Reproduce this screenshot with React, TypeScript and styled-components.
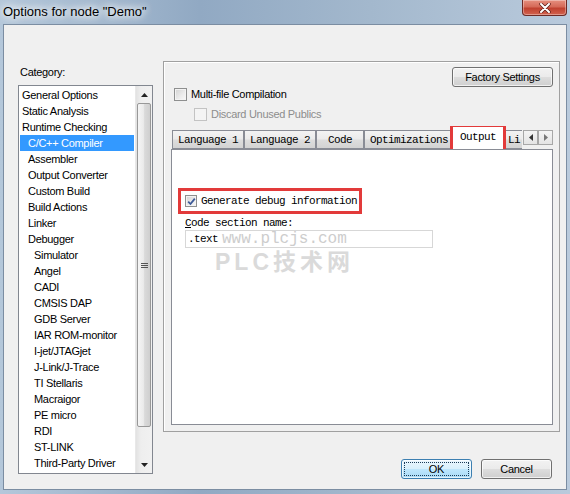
import React from "react";
import styled, { createGlobalStyle } from "styled-components";

const GlobalStyle = createGlobalStyle`
  html, body {
    margin: 0;
    padding: 0;
  }
  body {
    width: 570px;
    height: 494px;
    overflow: hidden;
    font-family: "Liberation Sans", Arial, sans-serif;
  }
`;

const Window = styled.div`
  width: 570px;
  height: 494px;
  box-sizing: border-box;
  display: flex;
  flex-direction: column;
  padding: 0 3px 4px 3px;
  background: linear-gradient(90deg, #b4c7da 0%, #91a9c3 35%, #a3b8cd 65%, #b9cadc 100%);
`;

const TitleBar = styled.div`
  height: 24px;
  display: flex;
  align-items: flex-start;
`;

const Title = styled.div`
  padding-top: 4px;
  font-size: 13px;
  line-height: 15px;
  color: #000;
  text-shadow: 0 0 6px #fff, 0 0 10px #fff, 0 0 14px #fff;
`;

const CloseButton = styled.div`
  margin-left: auto;
  width: 45px;
  height: 16px;
  box-sizing: border-box;
  border: 1px solid #6d2a25;
  border-top: none;
  border-radius: 0 0 4px 4px;
  background: linear-gradient(180deg, #e6907f 0%, #d56a58 45%, #c0412f 55%, #d2634f 100%);
  display: flex;
  align-items: center;
  justify-content: center;
  box-shadow: inset 0 0 0 1px rgba(255, 255, 255, 0.35);
`;

const Client = styled.div`
  flex: 1;
  display: flex;
  align-items: flex-start;
  border: 1px solid #7b8da2;
  background: #f0f0f0;
`;

const LeftColumn = styled.div`
  margin-left: 14px;
  width: 135px;
  display: flex;
  flex-direction: column;
`;

const Label = styled.div`
  margin-top: 40px;
  font-size: 11px;
  letter-spacing: -0.3px;
  line-height: 14px;
  padding-left: 2px;
  color: #000;
`;

const ListBox = styled.div`
  margin-top: 6px;
  height: 389px;
  box-sizing: border-box;
  border: 1px solid #828790;
  background: #fff;
  display: flex;
`;

const Items = styled.div`
  flex: 1;
  padding: 1px;
  display: flex;
  flex-direction: column;
`;

const Item = styled.div<{ $level: number; $selected?: boolean }>`
  height: 16px;
  line-height: 16px;
  font-size: 11px;
  letter-spacing: -0.3px;
  white-space: nowrap;
  padding-left: ${(p) => 2 + p.$level * 6}px;
  color: ${(p) => (p.$selected ? "#fff" : "#000")};
  background: ${(p) => (p.$selected ? "#3399ff" : "transparent")};
`;

const ScrollBar = styled.div`
  width: 17px;
  display: flex;
  flex-direction: column;
  background: linear-gradient(90deg, #e2e2e2 0%, #eeeeee 30%, #f1f1f1 100%);
  border-left: 1px solid #e8e8e8;
  box-sizing: border-box;
`;

const ScrollArrow = styled.div`
  height: 17px;
  display: flex;
  align-items: center;
  justify-content: center;
`;

const Thumb = styled.div`
  height: 324px;
  margin: 0 1px;
  box-sizing: border-box;
  border: 1px solid #989898;
  border-radius: 2px;
  background: linear-gradient(90deg, #f5f5f5 0%, #ebebeb 45%, #dadada 55%, #cfcfcf 100%);
  display: flex;
  align-items: center;
  justify-content: center;
`;

const TrackFill = styled.div`
  flex: 1;
`;

const RightColumn = styled.div`
  margin-left: 10px;
  width: 397px;
  padding-top: 36px;
  display: flex;
  flex-direction: column;
`;

const Panel = styled.div`
  height: 371px;
  box-sizing: border-box;
  border: 1px solid #a0a0a0;
  box-shadow: inset 1px 1px 0 #fff;
  padding: 5px 6px 6px 7px;
  display: flex;
  flex-direction: column;
`;

const TopBar = styled.div`
  display: flex;
  justify-content: flex-end;
`;

const Button = styled.div<{ $width: number; $default?: boolean }>`
  width: ${(p) => p.$width}px;
  height: 20px;
  box-sizing: border-box;
  border: 1px solid ${(p) => (p.$default ? "#3c7fb1" : "#707070")};
  border-radius: 3px;
  background: ${(p) =>
    p.$default
      ? "linear-gradient(180deg, #eaf6fd 0%, #d9f0fc 48%, #bee6fd 52%, #a7d9f5 100%)"
      : "linear-gradient(180deg, #f2f2f2 0%, #ebebeb 48%, #dddddd 52%, #cfcfcf 100%)"};
  box-shadow: inset 0 0 0 1px rgba(255, 255, 255, 0.7);
  outline: ${(p) => (p.$default ? "1px dotted #1b3a57" : "none")};
  outline-offset: -4px;
  font-size: 11px;
  letter-spacing: -0.3px;
  line-height: 18px;
  text-align: center;
  color: #000;
`;

const CheckRow = styled.div<{ $indent: number; $disabled?: boolean }>`
  height: 14px;
  margin-top: ${(p) => (p.$disabled ? 6 : 0)}px;
  padding-left: ${(p) => p.$indent}px;
  display: flex;
  align-items: center;
  gap: 4px;
  font-size: 11px;
  letter-spacing: -0.3px;
  color: ${(p) => (p.$disabled ? "#8d8d8d" : "#000")};
`;

const Box = styled.span<{ $disabled?: boolean; $size: number }>`
  width: ${(p) => p.$size}px;
  height: ${(p) => p.$size}px;
  box-sizing: border-box;
  flex: none;
  border: 1px solid ${(p) => (p.$disabled ? "#c3c3c3" : "#8e8f8f")};
  background: ${(p) =>
    p.$disabled ? "#f4f4f4" : "linear-gradient(135deg, #d2d2d2 0%, #ececec 60%, #f8f8f8 100%)"};
  box-shadow: inset 0 0 0 1px ${(p) => (p.$disabled ? "#f4f4f4" : "#f3f3f3")};
  display: flex;
  align-items: center;
  justify-content: center;
`;

const TabControl = styled.div`
  flex: 1;
  margin-top: 5px;
  display: flex;
  flex-direction: column;
`;

const TabStrip = styled.div`
  height: 23px;
  display: flex;
`;

const TabViewport = styled.div`
  flex: 1;
  overflow: hidden;
  display: flex;
  align-items: flex-end;
  padding-left: 1px;
`;

const Tab = styled.div<{ $active?: boolean; $partial?: boolean }>`
  flex: none;
  position: relative;
  box-sizing: border-box;
  min-width: ${(p) => (p.$partial ? 0 : 48)}px;
  height: ${(p) => (p.$active ? 24 : 19)}px;
  margin: ${(p) => (p.$active ? "0 -2px -1px -2px" : "0")};
  padding: ${(p) => (p.$active ? "0 7px" : p.$partial ? "1px 2px 0 5px" : "1px 5px 0 5px")};
  border: 1px solid #898c95;
  border-right: ${(p) => (p.$partial ? "none" : "1px solid #898c95")};
  border-bottom: ${(p) => (p.$active ? "none" : "1px solid #898c95")};
  background: ${(p) =>
    p.$active
      ? "#fff"
      : "linear-gradient(180deg, #f3f3f3 0%, #ebebeb 48%, #dddddd 52%, #d3d3d3 100%)"};
  z-index: ${(p) => (p.$active ? 2 : 1)};
  font-family: "Liberation Mono", "Courier New", monospace;
  font-size: 11px;
  letter-spacing: -0.6px;
  line-height: ${(p) => (p.$active ? 20 : 16)}px;
  white-space: nowrap;
  text-align: center;
  color: #000;
  outline: ${(p) => (p.$active ? "3px solid #e23a3a" : "none")};
  outline-offset: -1px;
`;

const ArrowGroup = styled.div`
  margin-top: 4px;
  display: flex;
`;

const SpinButton = styled.div`
  width: 15px;
  height: 15px;
  box-sizing: border-box;
  border: 1px solid #a7a7a7;
  background: linear-gradient(180deg, #f4f4f4 0%, #e4e4e4 100%);
  display: flex;
  align-items: center;
  justify-content: center;
`;

const Page = styled.div`
  flex: 1;
  position: relative;
  border: 1px solid #898c95;
  background: #fff;
  display: flex;
  flex-direction: column;
  align-items: flex-start;
`;

const Marked = styled.div`
  margin: 38px 0 0 6px;
  border: 3px solid #e23a3a;
  padding: 3px 2px 3px 4px;
  display: flex;
  align-items: center;
  gap: 4px;
`;

const MonoText = styled.span`
  font-family: "Liberation Mono", "Courier New", monospace;
  font-size: 11px;
  letter-spacing: -0.6px;
  line-height: 14px;
  color: #000;
  white-space: nowrap;
`;

const FieldLabel = styled(MonoText)`
  display: block;
  margin: 2px 0 0 13px;
`;

const Field = styled.div`
  margin-left: 13px;
  width: 248px;
  height: 18px;
  box-sizing: border-box;
  border: 1px solid #d7d7d7;
  padding-left: 2px;
  display: flex;
  align-items: center;
`;

const WatermarkUrl = styled.div`
  position: absolute;
  left: 50px;
  top: 81px;
  font-family: "Liberation Mono", "Courier New", monospace;
  font-size: 16px;
  line-height: 16px;
  color: #cdcdcd;
  pointer-events: none;
`;

const WatermarkName = styled.div`
  position: absolute;
  left: 43px;
  top: 99px;
  font-family: "Liberation Sans", "Noto Sans CJK SC", sans-serif;
  font-weight: bold;
  font-size: 23px;
  letter-spacing: 4px;
  line-height: 26px;
  color: #dadada;
  pointer-events: none;
`;

const ButtonRow = styled.div`
  margin-top: 27px;
  padding-right: 8px;
  display: flex;
  justify-content: flex-end;
  gap: 9px;
`;

const categories: { label: string; level: number; selected?: boolean }[] = [
  { label: "General Options", level: 0 },
  { label: "Static Analysis", level: 0 },
  { label: "Runtime Checking", level: 0 },
  { label: "C/C++ Compiler", level: 1, selected: true },
  { label: "Assembler", level: 1 },
  { label: "Output Converter", level: 1 },
  { label: "Custom Build", level: 1 },
  { label: "Build Actions", level: 1 },
  { label: "Linker", level: 1 },
  { label: "Debugger", level: 1 },
  { label: "Simulator", level: 2 },
  { label: "Angel", level: 2 },
  { label: "CADI", level: 2 },
  { label: "CMSIS DAP", level: 2 },
  { label: "GDB Server", level: 2 },
  { label: "IAR ROM-monitor", level: 2 },
  { label: "I-jet/JTAGjet", level: 2 },
  { label: "J-Link/J-Trace", level: 2 },
  { label: "TI Stellaris", level: 2 },
  { label: "Macraigor", level: 2 },
  { label: "PE micro", level: 2 },
  { label: "RDI", level: 2 },
  { label: "ST-LINK", level: 2 },
  { label: "Third-Party Driver", level: 2 },
];

const tabs = ["Language 1", "Language 2", "Code", "Optimizations", "Output"];

const Triangle: React.FC<{ dir: "up" | "down" | "left" | "right"; color?: string }> = ({
  dir,
  color = "#222",
}) => {
  const pts = {
    up: "0,4 3.5,0 7,4",
    down: "0,0 7,0 3.5,4",
    left: "4,0 4,7 0,3.5",
    right: "0,0 4,3.5 0,7",
  }[dir];
  const vertical = dir === "up" || dir === "down";
  return (
    <svg width={vertical ? 7 : 4} height={vertical ? 4 : 7} viewBox={vertical ? "0 0 7 4" : "0 0 4 7"}>
      <polygon points={pts} fill={color} />
    </svg>
  );
};

const CheckMark = () => (
  <svg width="9" height="9" viewBox="0 0 9 9">
    <path d="M1.2 4.6 L3.5 7 L7.8 1.6" fill="none" stroke="#3d5a98" strokeWidth="1.8" />
  </svg>
);

const App: React.FC = () => {
  return (
    <>
      <GlobalStyle />
      <Window>
        <TitleBar>
          <Title>Options for node "Demo"</Title>
          <CloseButton>
            <svg width="12" height="10" viewBox="0 0 12 10">
              <path d="M2 1 L10 9 M10 1 L2 9" stroke="#5a1d18" strokeWidth="3.4" strokeLinecap="round" />
              <path d="M2 1 L10 9 M10 1 L2 9" stroke="#fff" strokeWidth="2" strokeLinecap="round" />
            </svg>
          </CloseButton>
        </TitleBar>
        <Client>
          <LeftColumn>
            <Label>Category:</Label>
            <ListBox>
              <Items>
                {categories.map((c) => (
                  <Item key={c.label} $level={c.level} $selected={c.selected}>
                    {c.label}
                  </Item>
                ))}
              </Items>
              <ScrollBar>
                <ScrollArrow>
                  <Triangle dir="up" />
                </ScrollArrow>
                <Thumb>
                  <svg width="7" height="7" viewBox="0 0 7 7">
                    <path d="M0 1.5 H7 M0 3.5 H7 M0 5.5 H7" stroke="#555" strokeWidth="1" />
                  </svg>
                </Thumb>
                <TrackFill />
                <ScrollArrow>
                  <Triangle dir="down" />
                </ScrollArrow>
              </ScrollBar>
            </ListBox>
          </LeftColumn>
          <RightColumn>
            <Panel>
              <TopBar>
                <Button $width={101}>Factory Settings</Button>
              </TopBar>
              <CheckRow $indent={3}>
                <Box $size={13} />
                Multi-file Compilation
              </CheckRow>
              <CheckRow $indent={23} $disabled>
                <Box $size={13} $disabled />
                Discard Unused Publics
              </CheckRow>
              <TabControl>
                <TabStrip>
                  <TabViewport>
                    {tabs.map((t) => (
                      <Tab key={t} $active={t === "Output"}>
                        {t}
                      </Tab>
                    ))}
                    <Tab $partial>Li</Tab>
                  </TabViewport>
                  <ArrowGroup>
                    <SpinButton>
                      <Triangle dir="left" color="#333" />
                    </SpinButton>
                    <SpinButton>
                      <Triangle dir="right" color="#777" />
                    </SpinButton>
                  </ArrowGroup>
                </TabStrip>
                <Page>
                  <Marked>
                    <Box $size={12}>
                      <CheckMark />
                    </Box>
                    <MonoText>Generate debug information</MonoText>
                  </Marked>
                  <FieldLabel>
                    <u>C</u>ode section name:
                  </FieldLabel>
                  <Field>
                    <MonoText>.text</MonoText>
                  </Field>
                  <WatermarkUrl>www.plcjs.com</WatermarkUrl>
                  <WatermarkName>PLC技术网</WatermarkName>
                </Page>
              </TabControl>
            </Panel>
            <ButtonRow>
              <Button $width={71} $default>
                OK
              </Button>
              <Button $width={71}>Cancel</Button>
            </ButtonRow>
          </RightColumn>
        </Client>
      </Window>
    </>
  );
};

export default App;
